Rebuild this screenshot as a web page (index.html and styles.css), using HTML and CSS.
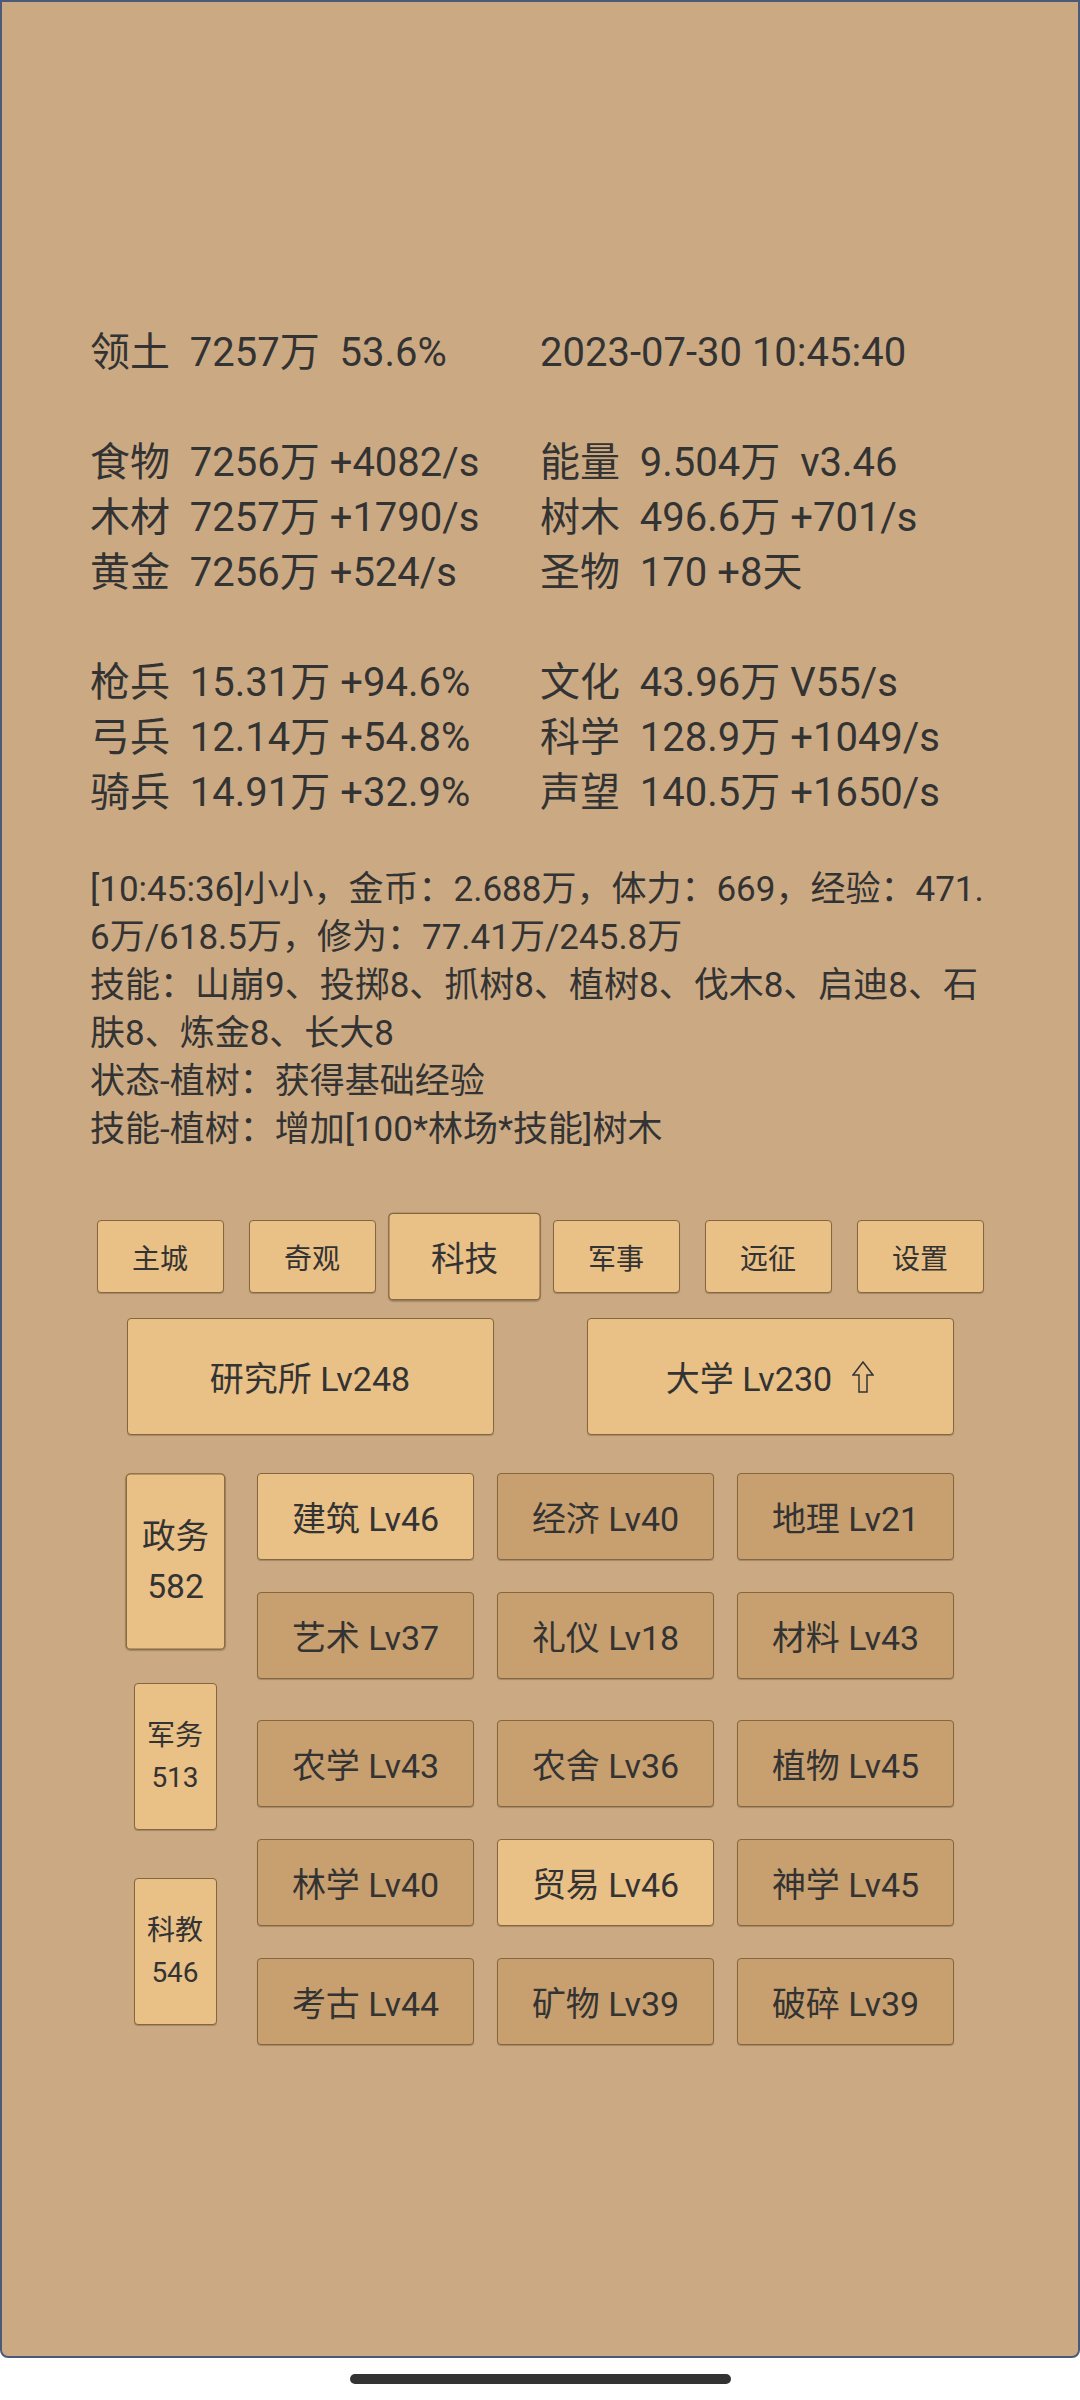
FILE: index.html
```html
<!DOCTYPE html>
<html lang="zh">
<head>
    <meta charset="UTF-8">
    <meta name="viewport" content="width=device-width, initial-scale=1.0">
    <title>科技</title>
    <link rel="stylesheet" href="styles.css">
</head>
<body>
    <div class="screen">
        <!-- Resources -->
        <section class="stats">
            <div class="stat-group">
                <div>领土  7257万  53.6%</div>
                <div class="clock">2023-07-30 10:45:40</div>
            </div>
            <div class="stat-group">
                <div>食物  7256万 +4082/s</div>
                <div>能量  9.504万  v3.46</div>
                <div>木材  7257万 +1790/s</div>
                <div>树木  496.6万 +701/s</div>
                <div>黄金  7256万 +524/s</div>
                <div>圣物  170 +8天</div>
            </div>
            <div class="stat-group">
                <div>枪兵  15.31万 +94.6%</div>
                <div>文化  43.96万 V55/s</div>
                <div>弓兵  12.14万 +54.8%</div>
                <div>科学  128.9万 +1049/s</div>
                <div>骑兵  14.91万 +32.9%</div>
                <div>声望  140.5万 +1650/s</div>
            </div>
        </section>

        <!-- Log -->
        <div class="log">
            <p>[10:45:36]小小，金币：2.688万，体力：669，经验：471.6万/618.5万，修为：77.41万/245.8万</p>
            <p>技能：山崩9、投掷8、抓树8、植树8、伐木8、启迪8、石肤8、炼金8、长大8</p>
            <p>状态-植树：获得基础经验</p>
            <p>技能-植树：增加[100*林场*技能]树木</p>
        </div>

        <!-- Tabs -->
        <nav class="tabs">
            <div class="tab">主城</div>
            <div class="tab">奇观</div>
            <div class="tab active">科技</div>
            <div class="tab">军事</div>
            <div class="tab">远征</div>
            <div class="tab">设置</div>
        </nav>

        <div class="halls">
            <div class="hall">研究所 Lv248</div>
            <div class="hall">
                <span>大学 Lv230</span>
                <svg class="up-arrow" width="22" height="32" viewBox="0 0 22 32">
                    <path d="M11 1 L21 14 L15 14 L15 31 L7 31 L7 14 L1 14 Z" fill="none" stroke="#333" stroke-width="1.5" stroke-linejoin="miter"/>
                </svg>
            </div>
        </div>

        <!-- Tech tree -->
        <section class="tech">
            <div class="tech-side">
                <div class="dept active">政务<br>582</div>
                <div class="dept">军务<br>513</div>
                <div class="dept">科教<br>546</div>
            </div>
            <div class="tech-grid">
                <div class="tile lit">建筑 Lv46</div>
                <div class="tile">经济 Lv40</div>
                <div class="tile">地理 Lv21</div>
                <div class="tile">艺术 Lv37</div>
                <div class="tile">礼仪 Lv18</div>
                <div class="tile">材料 Lv43</div>
                <div class="tile group-start">农学 Lv43</div>
                <div class="tile group-start">农舍 Lv36</div>
                <div class="tile group-start">植物 Lv45</div>
                <div class="tile">林学 Lv40</div>
                <div class="tile lit">贸易 Lv46</div>
                <div class="tile">神学 Lv45</div>
                <div class="tile">考古 Lv44</div>
                <div class="tile">矿物 Lv39</div>
                <div class="tile">破碎 Lv39</div>
            </div>
        </section>
    </div>

    <div class="home-bar"></div>
</body>
</html>
```

FILE: styles.css
```css
/* Reset */
* {
    margin: 0;
    padding: 0;
    box-sizing: border-box;
}

body {
    width: 1080px;
    background: #ffffff;
    color: #333;
    font-family: Roboto, "Noto Sans CJK SC", sans-serif;
}

/* Game screen */
.screen {
    height: 2358px;
    background: #cbaa83;
    border: 2px solid #4b5a77;
    border-radius: 0 0 8px 8px;
    padding-top: 323px;
}

/* Resource stats */
.stats {
    margin-left: 88px;
    font-size: 40px;
    line-height: 55px;
}

.stat-group {
    display: grid;
    grid-template-columns: 450px auto;
}

.stat-group > div {
    white-space: pre;
}

.stat-group + .stat-group {
    margin-top: 55px;
}

/* Log */
.log {
    width: 900px;
    margin: 46px 0 0 88px;
    font-size: 35px;
    line-height: 48px;
    word-break: break-all;
}

/* Shared button look */
.tab,
.hall,
.dept,
.tile {
    display: flex;
    align-items: center;
    justify-content: center;
    background: #e9c086;
    border: 1px solid #85663f;
    border-radius: 4px;
    box-shadow: 0 1px 1px rgba(0, 0, 0, 0.2);
}

/* Tabs */
.tabs {
    display: grid;
    grid-template-columns: repeat(6, 152px);
    width: 912px;
    margin: 66px auto 0;
}

.tab {
    justify-self: center;
    width: 127px;
    height: 73px;
    font-size: 28px;
}

.tab.active {
    transform: scale(1.2);
}

/* Buildings */
.halls {
    display: grid;
    grid-template-columns: 460px 460px;
    width: 920px;
    margin: 25px auto 0;
}

.hall {
    justify-self: center;
    width: 367px;
    height: 117px;
    font-size: 34px;
}

.up-arrow {
    margin-left: 20px;
}

/* Tech tree */
.tech {
    display: flex;
    margin: 38px 0 0 98px;
}

.tech-side {
    width: 150px;
    display: flex;
    flex-direction: column;
    align-items: center;
    gap: 48px;
    padding-top: 15px;
}

.dept {
    width: 83px;
    height: 147px;
    font-size: 28px;
    line-height: 42px;
    text-align: center;
}

.dept.active {
    transform: scale(1.2);
}

.tech-grid {
    margin-left: 7px;
    display: grid;
    grid-template-columns: repeat(3, 217px);
    column-gap: 23px;
    row-gap: 32px;
    align-content: start;
}

.tile {
    height: 87px;
    font-size: 34px;
    background: #c89f6e;
}

.tile.lit {
    background: #e9c086;
}

.tile.group-start {
    margin-top: 9px;
}

/* Home indicator */
.home-bar {
    width: 381px;
    height: 10px;
    margin: 16px auto 0;
    background: #333;
    border-radius: 5px;
}
```
